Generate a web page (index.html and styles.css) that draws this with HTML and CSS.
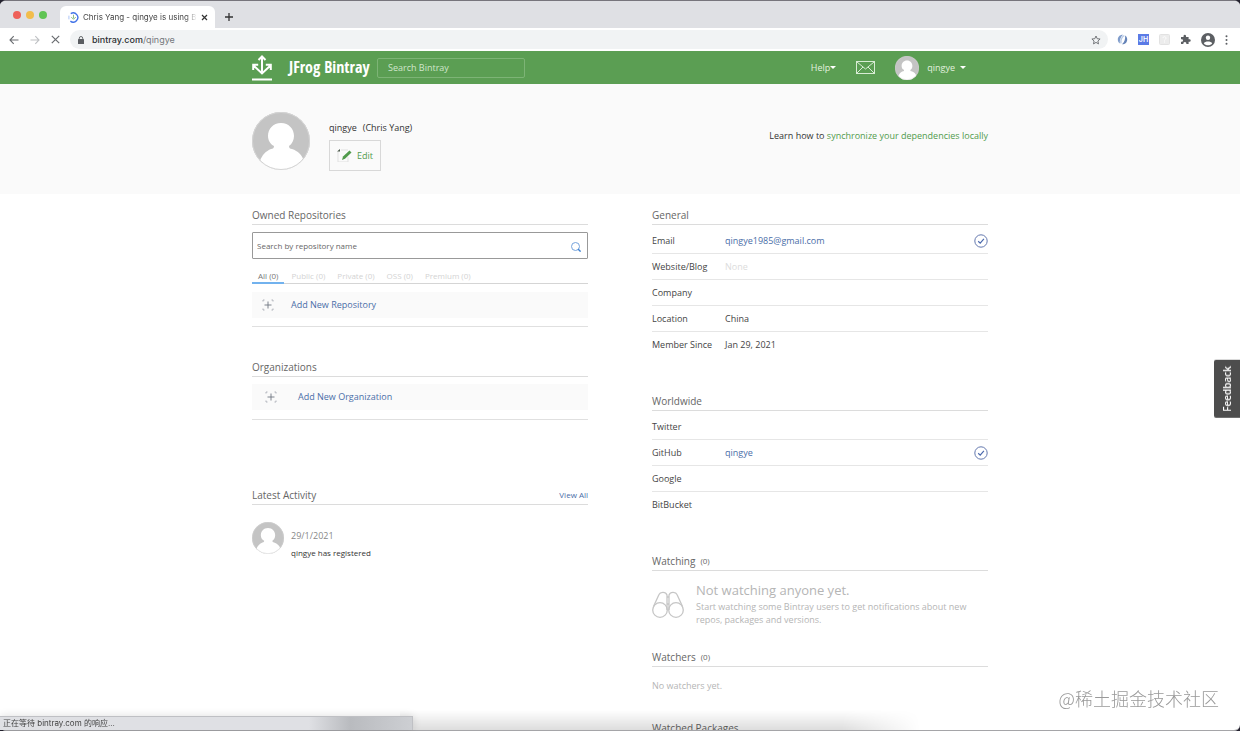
FILE: index.html
```html
<!DOCTYPE html>
<html lang="en">
<head>
<meta charset="utf-8">
<title>Chris Yang - qingye is using Bintray</title>
<link rel="stylesheet" href="styles.css">
</head>
<body>
<svg class="defs" aria-hidden="true">
  <symbol id="avatar" viewBox="0 0 58 58">
    <clipPath id="round"><circle cx="29" cy="29" r="29"/></clipPath>
    <g clip-path="url(#round)">
      <rect width="58" height="58" fill="#c4c4c4"/>
      <path d="M29 11c8 0 13 6 13 13 0 4-2 8-5 10 0 2 1 3 3 3 6 2 10 6 12 12L40 60H18L8 49c2-6 6-10 11-12 2 0 3-1 3-3-4-2-6-6-6-10 0-7 5-13 13-13z" fill="#fff"/>
    </g>
    <circle cx="29" cy="29" r="28.5" fill="none" stroke="#d4d4d4"/>
  </symbol>
  <symbol id="check" viewBox="0 0 14 14">
    <circle cx="7" cy="7" r="6.2" fill="none" stroke="#6478ae" stroke-width="1"/>
    <path d="M4.2 7.2l2 1.900 3.700-4.200" fill="none" stroke="#4a69ad" stroke-width="1.200"/>
  </symbol>
  <symbol id="add" viewBox="0 0 12 12">
    <path d="M6 2.500v7M2.500 6h7" stroke="#707782" fill="none" stroke-width=".9"/>
    <path d="M1 2.500V1h1.500M9.500 1H11v1.500M11 9.500V11H9.500M2.500 11H1V9.500" stroke="#a9adb5" fill="none" stroke-width=".9"/>
  </symbol>
</svg>

<div class="window">
  <div class="tabstrip">
    <div class="lights"><span class="light red"></span><span class="light amber"></span><span class="light green"></span></div>
    <div class="tab">
      <svg class="favicon" viewBox="0 0 12 12"><path d="M3 1.800A5 5 0 1 1 2.600 10" fill="none" stroke="#4374e8" stroke-width="1.500"/><path d="M6 3v4M3.500 5.500L6 8l2.500-2.500" fill="none" stroke="#87b97d"/><path d="M1 4v4" stroke="#a5bff5"/></svg>
      <span class="tab-title">Chris Yang - qingye is using Bintray</span>
      <button class="icon-btn" aria-label="Close tab"><svg width="7" height="7" viewBox="0 0 7 7"><path d="M1 1l5 5M6 1L1 6" stroke="#333" stroke-width="1.200"/></svg></button>
    </div>
    <button class="icon-btn new-tab" aria-label="New tab"><svg width="8" height="8" viewBox="0 0 8 8"><path d="M4 0v8M0 4h8" stroke="#333" stroke-width="1.300"/></svg></button>
  </div>

  <div class="toolbar">
    <div class="nav">
      <button class="icon-btn" aria-label="Back"><svg width="10" height="10" viewBox="0 0 10 10"><path d="M9.500 5H1M4.700 1.200L1 5l3.700 3.800" fill="none" stroke="#6a6d71" stroke-width="1.100"/></svg></button>
      <button class="icon-btn" aria-label="Forward"><svg width="10" height="10" viewBox="0 0 10 10"><path d="M.5 5H9M5.300 1.200L9 5 5.300 8.800" fill="none" stroke="#bfc1c4" stroke-width="1.100"/></svg></button>
      <button class="icon-btn" aria-label="Stop"><svg width="9" height="9" viewBox="0 0 9 9"><path d="M.8.8l7.400 7.400M8.200.8L.8 8.200" stroke="#6a6d71" stroke-width="1.200"/></svg></button>
    </div>
    <div class="omnibox">
      <svg width="6" height="8" viewBox="0 0 6 8"><rect y="3" width="6" height="5" rx=".6" fill="#5a5d61"/><path d="M1.300 3.500V2.200a1.700 1.700 0 0 1 3.400 0v1.300" fill="none" stroke="#5a5d61" stroke-width=".9"/></svg>
      <span class="url"><b>bintray.com</b>/qingye</span>
      <button class="icon-btn" aria-label="Bookmark"><svg width="10" height="10" viewBox="0 0 10 10"><path d="M5 1l1.200 2.700 2.900.3-2.200 2 .6 2.900L5 7.400 2.500 8.900l.6-2.900-2.200-2 2.900-.3z" fill="none" stroke="#66696d" stroke-width=".9"/></svg></button>
    </div>
    <div class="extensions">
      <svg width="11" height="11" viewBox="0 0 11 11"><path d="M6 .8C2.500.8.8 3 .8 5.600c0 1.700.7 3 2 4C2.600 6 3.500 3 6 .8z" fill="#7f9ccb"/><path d="M5 10.200c3.500 0 5.200-2.200 5.200-4.800 0-1.700-.7-3-2-4C8.400 5 7.500 8 5 10.200z" fill="#6483b8"/><path d="M4 9.300C3.500 6 4.800 3 7.300 1.500" fill="none" stroke="#b9cbe6" stroke-width="1.400"/></svg>
      <span class="ext-jh">JH</span>
      <svg width="11" height="11" viewBox="0 0 11 11"><rect x=".5" y=".5" width="10" height="10" rx="1" fill="#ececec" stroke="#e2e2e2"/><path d="M4 4.200c0-2 3-2 3 0 0 1-1.500 1.200-1.500 2.300M5.500 7.500v1" fill="none" stroke="#fff"/></svg>
      <svg width="11" height="11" viewBox="0 0 11 11"><path d="M1 3h2.600C3.200 1.800 3.800.8 4.800.8S6.400 1.800 6 3h2.600v2.300c1.200-.4 2.100.2 2.100 1.200s-.9 1.600-2.100 1.200V10H6.300c.3-1.200-.4-2-1.400-2s-1.800.8-1.500 2H1V7.800c1.200.2 2-.4 2-1.300S2.200 5 1 5.300z" fill="#5c5f63"/></svg>
      <svg class="profile" viewBox="0 0 14 14"><circle cx="7" cy="7" r="7" fill="#5c5f63"/><circle cx="7" cy="4.800" r="2.200" fill="#fff"/><path d="M2.800 10.200C4 7.800 10 7.800 11.200 10.200 9.500 13 4.500 13 2.800 10.200z" fill="#fff"/></svg>
      <svg width="3" height="10" viewBox="0 0 3 10"><g fill="#5c5f63"><circle cx="1.500" cy="1.300" r="1"/><circle cx="1.500" cy="5" r="1"/><circle cx="1.500" cy="8.700" r="1"/></g></svg>
    </div>
  </div>

  <div class="page">
    <header class="site-header">
      <div class="container header-row">
        <a class="brand" href="#">
          <svg width="20" height="26" viewBox="0 0 20 26"><path d="M10 2v16M6.500 5L10 1.500 13.500 5M1.500 10.500L10 18.500l8.500-8M1.200 15V9.800h5M18.800 15V9.800h-5" fill="none" stroke="#fff" stroke-width="2"/><path d="M0 24.500h20" stroke="#fff" stroke-width="2"/></svg>
          <span>JFrog Bintray</span>
        </a>
        <input class="site-search" type="text" placeholder="Search Bintray" aria-label="Search Bintray">
        <nav class="user-nav">
          <button class="menu-btn help">Help<i class="caret"></i></button>
          <a href="#" aria-label="Messages" class="mail"><svg width="19" height="13" viewBox="0 0 19 13"><rect x=".5" y=".5" width="18" height="12" fill="none" stroke="#d8ecd4"/><path d="M1 1l8.500 7L18 1M1 12l6-6M18 12l-6-6" fill="none" stroke="#d8ecd4"/></svg></a>
          <svg class="avatar-nav"><use href="#avatar"/></svg>
          <button class="menu-btn user">qingye<i class="caret"></i></button>
        </nav>
      </div>
    </header>

    <section class="hero">
      <div class="container hero-row">
        <svg class="avatar-big"><use href="#avatar"/></svg>
        <div class="identity">
          <div class="names"><span>qingye</span><span>(Chris Yang)</span></div>
          <button class="edit"><svg width="15" height="13" viewBox="0 0 15 13"><path d="M0 2.500L3 0v2.500z" fill="#4d5a4d"/><path d="M1 3v10h10V8M4 1h7" fill="none" stroke="#e1e1e1"/><path d="M5 11l1-3.500L12.500 1.500l2 2L8 9.800z" fill="#519b4c"/></svg>Edit</button>
        </div>
        <p class="learn">Learn how to <a href="#">synchronize your dependencies locally</a></p>
      </div>
    </section>

    <main class="container columns">
      <div class="column">
        <section class="block repos">
          <h2>Owned Repositories</h2>
          <div class="repo-search">
            <input type="text" placeholder="Search by repository name" aria-label="Search by repository name">
            <svg width="10" height="10" viewBox="0 0 10 10"><circle cx="4.500" cy="4.500" r="4" fill="none" stroke="#75a3dc"/><path d="M7 7l2.600 2.600" stroke="#3f82d2" stroke-width="1.400"/></svg>
          </div>
          <div class="filters">
            <button class="active">All (0)</button><button>Public (0)</button><button>Private (0)</button><button>OSS (0)</button><button>Premium (0)</button>
          </div>
          <div class="add-wrap"><a class="add-row" href="#"><svg width="12" height="12"><use href="#add"/></svg>Add New Repository</a></div>
        </section>
        <section class="block orgs">
          <h2>Organizations</h2>
          <div class="add-wrap"><a class="add-row" href="#"><svg width="12" height="12"><use href="#add"/></svg>Add New Organization</a></div>
        </section>
        <section class="block activity">
          <h2>Latest Activity <a href="#">View All</a></h2>
          <div class="event">
            <svg class="avatar-small"><use href="#avatar"/></svg>
            <div><time>29/1/2021</time><p>qingye has registered</p></div>
          </div>
        </section>
      </div>

      <div class="column">
        <section class="block details">
          <h2>General</h2>
          <dl>
            <div><dt>Email</dt><dd><a href="#">qingye1985@gmail.com</a></dd><svg class="check"><use href="#check"/></svg></div>
            <div><dt>Website/Blog</dt><dd class="none">None</dd></div>
            <div><dt>Company</dt><dd></dd></div>
            <div><dt>Location</dt><dd>China</dd></div>
            <div><dt>Member Since</dt><dd>Jan 29, 2021</dd></div>
          </dl>
        </section>
        <section class="block details">
          <h2>Worldwide</h2>
          <dl>
            <div><dt>Twitter</dt><dd></dd></div>
            <div><dt>GitHub</dt><dd><a href="#">qingye</a></dd><svg class="check"><use href="#check"/></svg></div>
            <div><dt>Google</dt><dd></dd></div>
            <div><dt>BitBucket</dt><dd></dd></div>
          </dl>
        </section>
        <section class="block watching">
          <h2>Watching <small>(0)</small></h2>
          <div class="empty">
            <svg width="32" height="28" viewBox="0 0 32 28"><g fill="none" stroke="#c6c6c6" stroke-width="1.300"><circle cx="8" cy="19" r="7.300"/><circle cx="24" cy="19" r="7.300"/><path d="M1.500 15.500L7 3.500C8 1 13.500 0 15 4v15M30.500 15.500L25 3.500C24 1 18.500 0 17 4v15M15 6h2M15 13h2"/></g></svg>
            <div><h3>Not watching anyone yet.</h3><p>Start watching some Bintray users to get notifications about new repos, packages and versions.</p></div>
          </div>
        </section>
        <section class="block watchers">
          <h2>Watchers <small>(0)</small></h2>
          <p>No watchers yet.</p>
        </section>
        <section class="block"><h2>Watched Packages</h2></section>
      </div>
    </main>
  </div>
</div>

<button class="feedback">Feedback</button>
<div class="watermark">@稀土掘金技术社区</div>
<div class="dock-shadow"></div>
<div class="status">正在等待 bintray.com 的响应...</div>
</body>
</html>
```

FILE: styles.css
```css
* { box-sizing: border-box; }
body, h2, h3, p, dl, dd { margin: 0; }
body {
  height: 100vh;
  overflow: hidden;
  background: #24222f;
  color: #444;
  font: 9px/14px "Open Sans", "Noto Sans", sans-serif;
}
button, input { font: inherit; color: inherit; }
button { border: 0; padding: 0; background: none; }
a { color: #4a6ea8; text-decoration: none; }
svg { display: block; flex: none; }
.defs { position: absolute; width: 0; height: 0; }

.window {
  display: flex;
  flex-direction: column;
  height: 100%;
  overflow: hidden;
  background: #fff;
  border-top: 1px solid #77757c;
  border-bottom: 1px solid #a5a5a8;
  border-radius: 6px;
}

/* Browser chrome */
.tabstrip {
  display: flex;
  flex: none;
  align-items: flex-end;
  height: 27px;
  background: #dfe0e4;
  font-family: Inter, "Noto Sans", sans-serif;
}
.lights { display: flex; gap: 5px; padding: 0 13px 9px; }
.light { width: 8px; height: 8px; border-radius: 50%; }
.red { background: #ee6059; }
.amber { background: #f2bd4c; }
.green { background: #5fc454; }
.icon-btn { display: flex; flex: none; align-items: center; justify-content: center; }
.tab {
  display: flex;
  align-items: center;
  width: 155px;
  height: 22px;
  padding: 0 7px 0 8px;
  background: #fff;
  border-radius: 6px 6px 0 0;
}
.favicon { width: 11px; height: 11px; margin-right: 4px; }
.tab-title {
  flex: 1;
  overflow: hidden;
  margin-right: 4px;
  font-size: 8px;
  white-space: nowrap;
  mask-image: linear-gradient(90deg, #000 90%, transparent);
}
.new-tab { width: 8px; height: 22px; margin-left: 10px; }
.toolbar {
  display: flex;
  flex: none;
  align-items: center;
  height: 23px;
  background: #fff;
  font-family: Inter, "Noto Sans", sans-serif;
}
.nav { display: flex; gap: 11px; padding: 0 10px 0 9px; }
.omnibox {
  display: flex;
  flex: 1;
  align-items: center;
  height: 19px;
  padding: 0 7px 0 8px;
  background: #f1f3f4;
  border-radius: 10px;
}
.url { flex: 1; margin-left: 8px; color: #75787c; }
.url b { font-weight: 500; color: #2d2f32; }
.extensions { display: flex; align-items: center; gap: 10px; padding: 0 12px 0 9px; }
.ext-jh {
  width: 11px;
  height: 11px;
  background: #5b7be6;
  color: #fff;
  font-size: 7px;
  font-weight: 600;
  line-height: 11px;
  text-align: center;
}
.profile { width: 14px; height: 14px; }

/* Site header */
.page { flex: 1; min-height: 0; overflow: hidden; }
.container { width: 100%; max-width: 736px; margin: 0 auto; }
.site-header { background: #5b9e53; }
.header-row { display: flex; align-items: center; height: 33px; }
.brand {
  display: flex;
  align-items: center;
  gap: 17px;
  width: 125px;
  color: #fff;
  font: bold 16px/20px "Liberation Sans Narrow", "Open Sans Condensed", Lato, sans-serif;
  white-space: nowrap;
}
.brand span { padding-bottom: 1px; }
.site-search {
  width: 148px;
  height: 20px;
  padding: 0 10px;
  background: transparent;
  border: 1px solid #7db476;
  border-radius: 2px;
  color: #fff;
}
.site-search::placeholder { color: #d0e6cc; opacity: 1; }
.user-nav { display: flex; align-items: center; margin-left: auto; padding-right: 22px; }
.menu-btn { display: flex; align-items: center; color: #e2f1df; }
.caret { border: 3px solid transparent; border-top-color: #fff; border-bottom: 0; }
.mail { margin: 0 20px; }
.avatar-nav { width: 24px; height: 24px; margin-right: 8px; }
.user { gap: 5px; }

/* Profile banner */
.hero { background: #fafafa; }
.hero-row { display: flex; height: 110px; padding-top: 28px; }
.avatar-big { width: 58px; height: 58px; margin-right: 19px; }
.identity { padding-top: 9px; color: #333; }
.names { display: flex; gap: 6px; margin-bottom: 5px; }
.edit {
  display: flex;
  align-items: center;
  justify-content: center;
  gap: 5px;
  width: 52px;
  height: 31px;
  border: 1px solid #d8d8d8;
  color: #519b4c;
}
.learn { margin-left: auto; padding-top: 17px; color: #333; }
.learn a { color: #519b4c; }

/* Content */
.columns { display: grid; grid-template-columns: 1fr 1fr; gap: 64px; padding-top: 12px; }
h2 {
  display: flex;
  align-items: center;
  height: 19px;
  padding-bottom: 1px;
  border-bottom: 1px solid #dcdcdc;
  color: #666;
  font-size: 10px;
  font-weight: 400;
}
h2 small { margin-left: 5px; font-size: 8px; }
h2 a { margin-left: auto; font-size: 8px; }
.repos { margin-bottom: 31px; }
.repo-search {
  display: flex;
  align-items: center;
  height: 27px;
  margin: 7px 0 11px;
  padding: 0 6px 0 4px;
  border: 1px solid #999;
  border-radius: 1px;
}
.repo-search input { flex: 1; border: 0; padding: 0; outline: 0; background: none; font-size: 8px; }
.repo-search input::placeholder { color: #666; opacity: 1; }
.repo-search svg { margin-top: 3px; }
.filters { display: flex; gap: 2px; border-bottom: 1px solid #d5d5d5; }
.filters button {
  height: 14px;
  margin-bottom: -1px;
  padding: 0 5px;
  color: #d3d3d3;
  font-size: 8px;
  line-height: 12px;
  border-bottom: 2px solid transparent;
}
.filters .active { padding: 0 6px; color: #777; border-color: #72b2ee; }
.add-wrap { padding: 8px 0; border-bottom: 1px solid #e0e0e0; }
.add-row { display: flex; align-items: center; gap: 17px; height: 26px; padding-left: 10px; background: #fafafa; }
.orgs { margin-bottom: 66px; }
.orgs .add-wrap { padding: 7px 0 9px; }
.orgs .add-row { gap: 21px; padding-left: 13px; }
.event { display: flex; gap: 7px; padding-top: 17px; color: #333; }
.event div { padding-top: 7px; }
.event time { display: block; margin-bottom: 3px; color: #888; }
.event p { font-size: 8px; }
.avatar-small { width: 32px; height: 32px; }
.details { margin-bottom: 34px; }
.details dl { padding-top: 3px; }
.details dl div { display: flex; align-items: center; height: 26px; border-bottom: 1px solid #e6e6e6; }
.details dl div:last-child { border-color: transparent; }
dt { width: 73px; }
dd { flex: 1; }
.none { color: #dcdcdc; }
.check { width: 14px; height: 14px; }
.watching { margin-bottom: 22px; }
.empty { display: flex; gap: 12px; padding: 10px 0 0; color: #b5b5b5; }
.empty > svg { margin-top: 10px; }
.empty h3 { font-size: 13px; font-weight: 400; line-height: 19px; }
.empty p { line-height: 13px; }
.watchers { margin-bottom: 26px; }
.watchers p { padding-top: 12px; color: #b5b5b5; }

/* Overlays */
.feedback {
  position: fixed;
  top: 360px;
  right: 0;
  padding: 6px;
  background: #4d4d4d;
  border-radius: 0 2px 2px 0;
  color: #fff;
  font-size: 10px;
  font-weight: 600;
  writing-mode: vertical-rl;
  transform: rotate(180deg);
}
.watermark {
  position: fixed;
  right: 21px;
  bottom: 20px;
  color: #999;
  font: 300 18px/26px "Noto Sans CJK SC", sans-serif;
}
.dock-shadow {
  position: fixed;
  left: 400px;
  bottom: 1px;
  width: 520px;
  height: 20px;
  background: linear-gradient(0deg, #0002, transparent);
  mask-image: linear-gradient(90deg, #000 85%, transparent);
}
.status {
  position: fixed;
  left: 0;
  bottom: 1px;
  width: 413px;
  padding-left: 3px;
  background: linear-gradient(90deg, #dfe0e4 75%, #b9bbbf 85%, #cdcfd3);
  border: 1px solid #bfc0c4;
  border-width: 1px 1px 0 0;
  box-shadow: 0 0 8px #0002;
  color: #444;
  font: 8px/13px Inter, "Noto Sans CJK SC", sans-serif;
}
```
